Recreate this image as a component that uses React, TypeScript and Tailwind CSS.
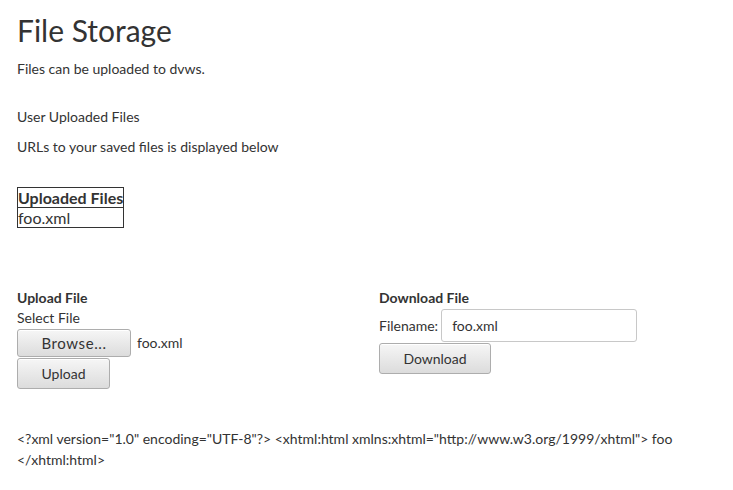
import React from "react";

const btn =
  "rounded-[3px] border border-[#adadad] bg-gradient-to-b from-[#f6f6f6] to-[#dcdcdc] text-[#333] text-[14px] shadow-[inset_0_1px_0_#fff]";

const App: React.FC = () => {
  return (
    <div className="min-h-[490px] w-[733px] bg-white px-[17px] pt-[12px] font-['Lato',sans-serif] text-[14px] leading-[20px] text-[#333]">
      <h1 className="text-[30px] leading-[36px] font-normal">File Storage</h1>
      <p className="mt-[11px]">Files can be uploaded to dvws.</p>
      <p className="mt-[28px]">User Uploaded Files</p>
      <p className="mt-[10px]">URLs to your saved files is displayed below</p>

      <table className="mt-[30px] border-collapse border border-[#333] text-left text-[16px] leading-[19px]">
        <thead>
          <tr>
            <th className="border border-[#333] p-0 font-bold">Uploaded Files</th>
          </tr>
        </thead>
        <tbody>
          <tr>
            <td className="border border-[#333] p-0">foo.xml</td>
          </tr>
        </tbody>
      </table>

      <div className="mt-[60px] flex">
        <div className="w-[362px]">
          <div className="font-bold">Upload File</div>
          <div>Select File</div>
          <div className="mt-[1px] flex items-center">
            <button className={`${btn} h-[28px] w-[114px] text-[15px] tracking-[0.6px]`}>Browse...</button>
            <span className="ml-[6px]">foo.xml</span>
          </div>
          <button className={`${btn} mt-[1px] h-[31px] w-[93px]`}>Upload</button>
        </div>
        <div>
          <div className="font-bold">Download File</div>
          <div className="mt-[1px] flex items-center">
            <span>Filename:</span>
            <input
              readOnly
              value="foo.xml"
              className="ml-[3px] h-[33px] w-[196px] rounded-[3px] border border-[#c8c8c8] px-[10px] text-[14px] text-[#333] outline-none"
            />
          </div>
          <button className={`${btn} mt-[1px] h-[31px] w-[112px]`}>Download</button>
        </div>
      </div>

      <p className="mt-[39px] leading-[21px]">
        &lt;?xml version="1.0" encoding="UTF-8"?&gt; &lt;xhtml:html xmlns:xhtml="http://www.w3.org/1999/xhtml"&gt; foo &lt;/xhtml:html&gt;
      </p>
    </div>
  );
};

export default App;
